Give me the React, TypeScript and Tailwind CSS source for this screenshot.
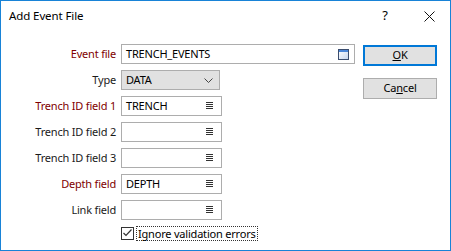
import React from "react";

const font = { fontFamily: '"Noto Sans", "Open Sans", sans-serif' };

function Lines() {
  return (
    <svg width="7" height="8" viewBox="0 0 7 8" className="shrink-0">
      <rect x="0" y="0" width="7" height="1" fill="#333" />
      <rect x="0" y="2" width="7" height="1" fill="#333" />
      <rect x="0" y="4" width="7" height="1" fill="#333" />
      <rect x="0" y="6" width="7" height="1" fill="#333" />
    </svg>
  );
}

function FieldInput({ value }: { value: string }) {
  return (
    <div className="flex h-[20px] w-[101px] items-center justify-between border border-[#adadad] bg-white pl-[4px] pr-[8px] text-[11px] tracking-[-0.2px] text-black">
      <span>{value}</span>
      <Lines />
    </div>
  );
}

function Label({ text, red }: { text: string; red?: boolean }) {
  return (
    <div
      className={`flex h-[20px] items-center justify-end text-[11px] tracking-[-0.2px] ${red ? "text-[#800000]" : "text-[#1a1a1a]"}`}
    >
      {text}
    </div>
  );
}

export default function App() {
  return (
    <div
      className="flex h-[251px] w-[451px] flex-col border border-[#1883d7] bg-white"
      style={font}
    >
      <div className="flex h-[30px] items-center pl-[8px] text-[11.5px] tracking-[-0.1px] text-black">
        <span className="flex-1">Add Event File</span>
        <span className="w-[14px] text-center text-[13px]">?</span>
        <div className="ml-[30px] mr-[14px] flex h-[14px] w-[14px] items-center justify-center">
          <svg width="11" height="11" viewBox="0 0 11 11">
            <path d="M0.5 0.5 L10.5 10.5 M10.5 0.5 L0.5 10.5" stroke="#111" strokeWidth="1" />
          </svg>
        </div>
      </div>
      <div className="flex pt-[13px]">
        <div className="grid grid-cols-[115px_auto] gap-x-[5px] gap-y-[6px]">
          <Label text="Event file" red />
          <div className="flex h-[20px] w-[234px] items-center justify-between border border-[#adadad] bg-white pl-[4px] pr-[5px] text-[11px] tracking-[-0.2px] text-black">
            <span>TRENCH_EVENTS</span>
            <div className="flex h-[11px] w-[11px] flex-col border border-[#3b4d6e] bg-gradient-to-br from-[#ffffff] to-[#c7d6ee]">
              <div className="h-[2px] bg-[#4a86d8]" />
            </div>
          </div>
          <Label text="Type" />
          <div className="flex h-[20px] w-[99px] items-center justify-between border border-[#adadad] bg-[#e1e1e1] pl-[4px] pr-[6px] text-[11px] tracking-[-0.2px] text-black">
            <span>DATA</span>
            <svg width="9" height="5" viewBox="0 0 9 5">
              <path d="M0.5 0.5 L4.5 4.5 L8.5 0.5" stroke="#444" strokeWidth="1" fill="none" />
            </svg>
          </div>
          <Label text="Trench ID field 1" red />
          <FieldInput value="TRENCH" />
          <Label text="Trench ID field 2" />
          <FieldInput value="" />
          <Label text="Trench ID field 3" />
          <FieldInput value="" />
          <Label text="Depth field" red />
          <FieldInput value="DEPTH" />
          <Label text="Link field" />
          <FieldInput value="" />
          <div />
          <div className="flex h-[14px] items-center">
            <div className="flex h-[13px] w-[13px] items-center justify-center border border-[#333] bg-white">
              <svg width="9" height="8" viewBox="0 0 9 8">
                <path d="M0.5 4 L3 6.5 L8.5 0.5" stroke="#333" strokeWidth="1.2" fill="none" />
              </svg>
            </div>
            <span className="ml-[2px] border border-dotted border-[#333] px-[1px] text-[11px] leading-[13px] tracking-[-0.2px] text-black">
              Ignore validation errors
            </span>
          </div>
        </div>
        <div className="ml-[8px] flex flex-col gap-[12px] pt-[1px]">
          <button className="flex h-[21px] w-[74px] items-center justify-center border-2 border-[#0078d7] bg-[#e1e1e1] text-[11px] tracking-[-0.2px] text-black">
            <span>
              <u>O</u>K
            </span>
          </button>
          <button className="flex h-[21px] w-[74px] items-center justify-center border border-[#adadad] bg-[#e1e1e1] text-[11px] tracking-[-0.2px] text-black">
            <span>
              Ca<u>n</u>cel
            </span>
          </button>
        </div>
      </div>
    </div>
  );
}
